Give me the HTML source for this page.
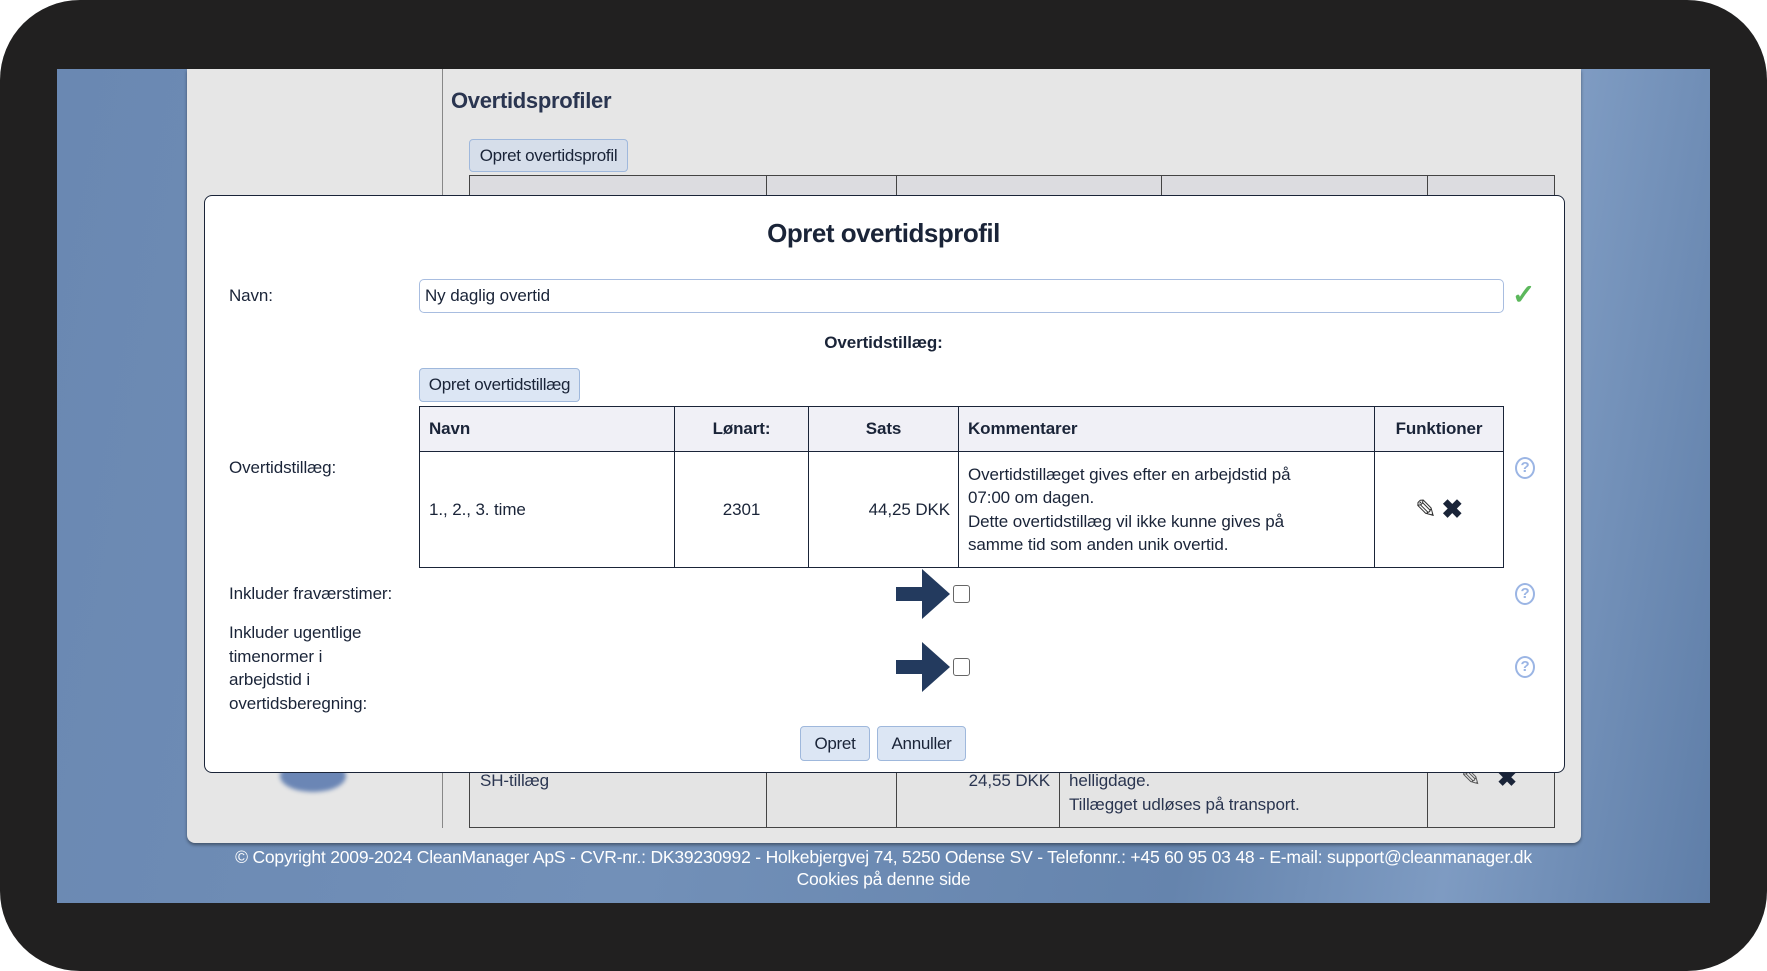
<!DOCTYPE html>
<html><head><meta charset="utf-8">
<style>
*{box-sizing:border-box;margin:0;padding:0}
body{width:1767px;height:971px;background:#fff;position:relative;overflow:hidden;font-family:"Liberation Sans",sans-serif;color:#1a2438;font-size:17px;letter-spacing:-0.1px}
.frame{position:absolute;left:0;top:0;width:1767px;height:971px;background:#212020;border-radius:80px}
.screen{position:absolute;left:57px;top:69px;width:1653px;height:834px;background:linear-gradient(100deg,#6a88b2 0%,#7290b8 40%,#6584ad 70%,#7e9bc2 85%,#5f7ea8 100%)}
.a{position:absolute;white-space:nowrap}
.panel{position:absolute;left:187px;top:69px;width:1394px;height:774px;background:#e6e6e6;border-radius:0 0 8px 8px;box-shadow:0 2px 3px rgba(0,0,0,.4)}
.btn{position:absolute;background:#dce6f4;border:1px solid #9fb8dc;border-radius:4px;text-align:center;font-size:17px;color:#1a2438;letter-spacing:-0.3px}
.modal{position:absolute;left:204px;top:195px;width:1361px;height:578px;background:#fff;border:1px solid #1a2438;border-radius:8px}
table{border-collapse:collapse;position:absolute}
td,th{border:1px solid #1a2438}
.help{position:absolute;width:20px;height:22px;border:2px solid #9bb5e4;border-radius:50%;color:#9bb5e4;font-size:15px;text-align:center;line-height:18px;font-weight:bold}
.cb{position:absolute;width:17px;height:18px;border:1.5px solid #666;border-radius:3px;background:#fff}
</style></head><body>
<div class="frame"></div>
<div class="screen"></div>
<div class="panel"></div>
<div class="a" style="left:442px;top:69px;width:1px;height:759px;background:#888"></div>
<div class="a" style="left:451px;top:88px;font-size:22px;font-weight:bold;color:#2a3550;letter-spacing:-0.3px">Overtidsprofiler</div>
<div class="btn" style="left:469px;top:139px;width:159px;height:33px;line-height:31px;background:#d6deea">Opret overtidsprofil</div>
<div class="a" style="left:469px;top:175px;width:1086px;height:653px;border:1px solid #444;background:#e4e4e4"></div>
<div class="a" style="left:469px;top:175px;width:1086px;height:22px;background:#dcdce0;border:1px solid #444"></div>
<div class="a" style="left:766px;top:175px;width:1px;height:653px;background:#444"></div>
<div class="a" style="left:896px;top:175px;width:1px;height:653px;background:#444"></div>
<div class="a" style="left:1161px;top:175px;width:1px;height:22px;background:#444"></div>
<div class="a" style="left:1059px;top:770px;width:1px;height:58px;background:#444"></div>
<div class="a" style="left:1427px;top:175px;width:1px;height:653px;background:#444"></div>
<div class="a" style="left:480px;top:771px;color:#2a3550">SH-tillæg</div>
<div class="a" style="left:940px;top:771px;color:#2a3550;width:110px;text-align:right">24,55 DKK</div>
<div class="a" style="left:1069px;top:771px;color:#2a3550">helligdage.</div>
<div class="a" style="left:1069px;top:795px;color:#2a3550">Tillægget udløses på transport.</div>
<div class="a" style="left:1461px;top:764px;font-size:24px;color:#555">✎</div>
<div class="a" style="left:1497px;top:764px;font-size:24px;font-weight:bold;color:#1a2438">✖</div>
<div class="a" style="left:280px;top:760px;width:66px;height:32px;border-radius:50%;background:#6b86b5;filter:blur(2px)"></div>

<div class="modal"></div>
<div class="a" style="left:0;width:1767px;top:218px;text-align:center;font-size:26px;font-weight:bold;letter-spacing:-0.5px">Opret overtidsprofil</div>
<div class="a" style="left:229px;top:286px">Navn:</div>
<div class="a" style="left:419px;top:279px;width:1085px;height:34px;border:1.5px solid #a8bde0;border-radius:5px;padding:6px 5px;font-size:17px">Ny daglig overtid</div>
<div class="a" style="left:1512px;top:278px;font-size:28px;color:#5cb85c;font-weight:bold">✓</div>
<div class="a" style="left:0;width:1767px;top:333px;text-align:center;font-weight:bold">Overtidstillæg:</div>
<div class="btn" style="left:419px;top:368px;width:161px;height:34px;line-height:32px">Opret overtidstillæg</div>
<table style="left:419px;top:406px;width:1085px">
<tr style="height:45px;background:#f0f0f6;font-weight:bold"><th style="width:255px;text-align:left;padding-left:9px">Navn</th><th style="width:134px">Lønart:</th><th style="width:150px">Sats</th><th style="width:416px;text-align:left;padding-left:9px">Kommentarer</th><th>Funktioner</th></tr>
<tr style="height:116px"><td style="padding-left:9px">1., 2., 3. time</td><td style="text-align:center">2301</td><td style="text-align:right;padding-right:8px">44,25 DKK</td><td style="padding-left:9px;line-height:23.5px">Overtidstillæget gives efter en arbejdstid på<br>07:00 om dagen.<br>Dette overtidstillæg vil ikke kunne gives på<br>samme tid som anden unik overtid.</td><td style="text-align:center"><span style="font-size:26px;color:#333">✎</span> <span style="font-size:26px;font-weight:bold">✖</span></td></tr>
</table>
<div class="a" style="left:229px;top:458px">Overtidstillæg:</div>
<div class="help" style="left:1515px;top:457px">?</div>
<div class="a" style="left:229px;top:584px">Inkluder fraværstimer:</div>
<svg class="a" style="left:896px;top:569px" width="56" height="50"><path d="M0 18h26V0l28 25-28 25V32H0z" fill="#233a5e"/></svg>
<div class="cb" style="left:953px;top:585px"></div>
<div class="help" style="left:1515px;top:583px">?</div>
<div class="a" style="left:229px;top:621px;line-height:23.7px">Inkluder ugentlige<br>timenormer i<br>arbejdstid i<br>overtidsberegning:</div>
<svg class="a" style="left:896px;top:642px" width="56" height="50"><path d="M0 18h26V0l28 25-28 25V32H0z" fill="#233a5e"/></svg>
<div class="cb" style="left:953px;top:658px"></div>
<div class="help" style="left:1515px;top:656px">?</div>
<div class="btn" style="left:800px;top:726px;width:70px;height:35px;line-height:33px">Opret</div>
<div class="btn" style="left:877px;top:726px;width:89px;height:35px;line-height:33px">Annuller</div>
<div class="a" style="left:0;width:1767px;top:846px;text-align:center;color:#fff;line-height:22px;font-size:17.5px;letter-spacing:-0.2px">© Copyright 2009-2024 CleanManager ApS - CVR-nr.: DK39230992 - Holkebjergvej 74, 5250 Odense SV - Telefonnr.: +45 60 95 03 48 - E-mail: support@cleanmanager.dk<br>Cookies på denne side</div>
</body></html>
